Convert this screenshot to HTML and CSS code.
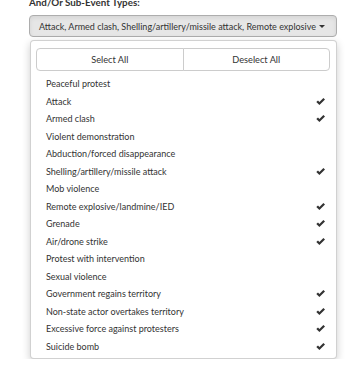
FILE: index.html
```html
<!DOCTYPE html>
<html>
<head>
  <meta charset="utf-8" />
  <title>Sub-Event Types</title>
  <link rel="stylesheet" href="styles.css">
</head>
<body>
<div class="filterGroup">
  <label class="filterLabel">And/Or Sub-Event Types:</label>
  <div class="selectToggle">
    <span class="selectText">Attack, Armed clash, Shelling/artillery/missile attack, Remote explosive</span>
    <span class="caret"></span>
  </div>
  <div class="selectMenu">
    <div class="actions">
      <div class="actionBtn">Select All</div>
      <div class="actionBtn">Deselect All</div>
    </div>
    <ul class="options">
      <li>Peaceful protest</li>
      <li>Attack <svg class="check" viewBox="0 0 9 7"><path d="M0.3 4.1 L2 2.5 L3.4 3.9 L7.4 0 L9 1.6 L3.4 7 Z"/></svg></li>
      <li>Armed clash <svg class="check" viewBox="0 0 9 7"><path d="M0.3 4.1 L2 2.5 L3.4 3.9 L7.4 0 L9 1.6 L3.4 7 Z"/></svg></li>
      <li>Violent demonstration</li>
      <li>Abduction/forced disappearance</li>
      <li>Shelling/artillery/missile attack <svg class="check" viewBox="0 0 9 7"><path d="M0.3 4.1 L2 2.5 L3.4 3.9 L7.4 0 L9 1.6 L3.4 7 Z"/></svg></li>
      <li>Mob violence</li>
      <li>Remote explosive/landmine/IED <svg class="check" viewBox="0 0 9 7"><path d="M0.3 4.1 L2 2.5 L3.4 3.9 L7.4 0 L9 1.6 L3.4 7 Z"/></svg></li>
      <li>Grenade <svg class="check" viewBox="0 0 9 7"><path d="M0.3 4.1 L2 2.5 L3.4 3.9 L7.4 0 L9 1.6 L3.4 7 Z"/></svg></li>
      <li>Air/drone strike <svg class="check" viewBox="0 0 9 7"><path d="M0.3 4.1 L2 2.5 L3.4 3.9 L7.4 0 L9 1.6 L3.4 7 Z"/></svg></li>
      <li>Protest with intervention</li>
      <li>Sexual violence</li>
      <li>Government regains territory <svg class="check" viewBox="0 0 9 7"><path d="M0.3 4.1 L2 2.5 L3.4 3.9 L7.4 0 L9 1.6 L3.4 7 Z"/></svg></li>
      <li>Non-state actor overtakes territory <svg class="check" viewBox="0 0 9 7"><path d="M0.3 4.1 L2 2.5 L3.4 3.9 L7.4 0 L9 1.6 L3.4 7 Z"/></svg></li>
      <li>Excessive force against protesters <svg class="check" viewBox="0 0 9 7"><path d="M0.3 4.1 L2 2.5 L3.4 3.9 L7.4 0 L9 1.6 L3.4 7 Z"/></svg></li>
      <li>Suicide bomb <svg class="check" viewBox="0 0 9 7"><path d="M0.3 4.1 L2 2.5 L3.4 3.9 L7.4 0 L9 1.6 L3.4 7 Z"/></svg></li>
    </ul>
  </div>
</div>
</body>
</html>
```

FILE: styles.css
```css
* { margin: 0; padding: 0; box-sizing: border-box; }
body { font-family: Lato, "Open Sans", sans-serif; font-size: 9px; color: #333; background: #fff; }
.filterGroup { padding-left: 29px; width: 337px; }
.filterLabel { display: block; font-weight: bold; font-size: 9.8px; line-height: 14px; margin-top: -5px; margin-bottom: 6px; }
.selectToggle { display: flex; align-items: center; width: 308px; height: 22px; padding: 0 11px 0 9px; background: #e6e6e6; border: 1px solid #adadad; border-radius: 4px; box-shadow: inset 0 2px 4px rgba(0,0,0,0.08); }
.selectText { flex: 1; white-space: nowrap; }
.caret { width: 0; height: 0; border-left: 3px solid transparent; border-right: 3px solid transparent; border-top: 3px solid #333; margin-left: 2px; }
.selectMenu { margin: 3px 0 0 1px; width: 307px; background: #fff; border: 1px solid rgba(0,0,0,0.18); border-radius: 4px; box-shadow: 0 3px 8px rgba(0,0,0,0.2); padding: 7px 0 3px; }
.actions { display: flex; margin: 0 6px 4px 5px; }
.actionBtn { flex: 1; height: 23px; line-height: 21px; text-align: center; font-size: 9.2px; background: #fff; border: 1px solid #ccc; }
.actionBtn:first-child { border-radius: 4px 0 0 4px; }
.actionBtn:last-child { border-radius: 0 4px 4px 0; margin-left: -1px; }
.options { list-style: none; }
.options li { display: flex; justify-content: space-between; align-items: center; height: 17.5px; padding: 0 11px 0 15px; }
.check { width: 9px; height: 7px; fill: #333; }
```
